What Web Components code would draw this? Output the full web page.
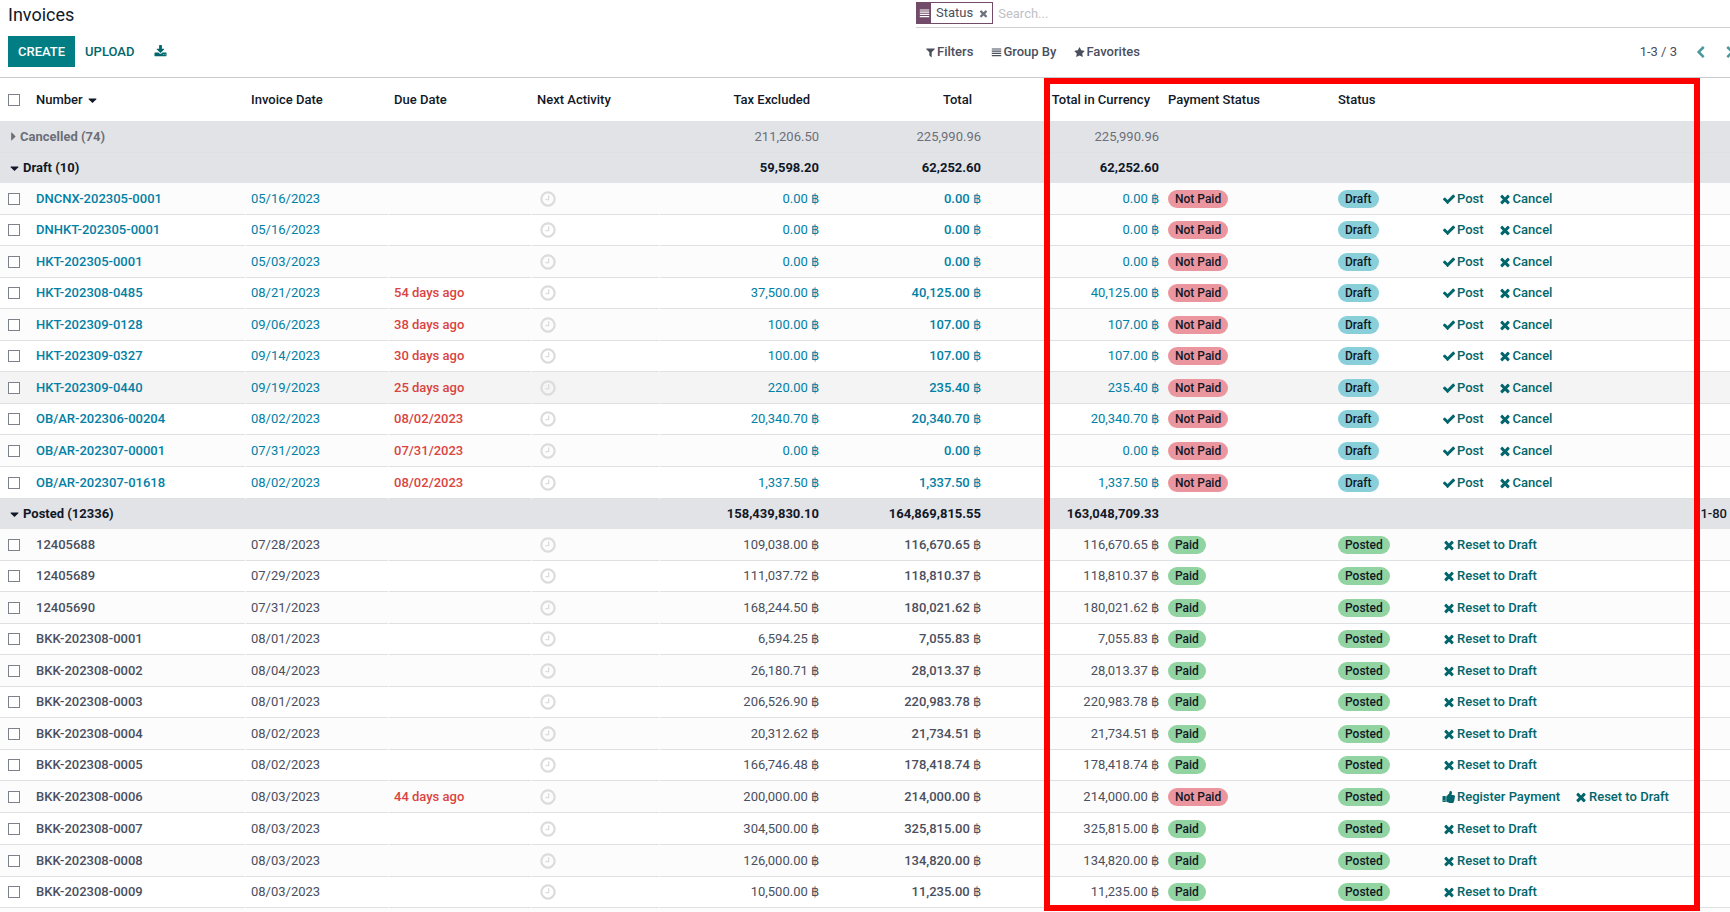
<!DOCTYPE html>
<html lang="en">
<head>
<meta charset="utf-8">
<title>Invoices</title>
<style>
  html, body { height: 100%; }
  body { margin: 0; overflow: hidden; background: #fff; color: #4a4f5e; font: 13px/20px Roboto, "Noto Sans", sans-serif; }
</style>
</head>
<body>
<invoice-app></invoice-app>
<script>
const ICONS = {
  check: 'M1671 566q0 40-28 68l-724 724-136 136q-28 28-68 28t-68-28l-136-136-362-362q-28-28-28-68t28-68l136-136q28-28 68-28t68 28l294 295 656-657q28-28 68-28t68 28l136 136q28 28 28 68z',
  times: 'M1490 1322q0 40-28 68l-136 136q-28 28-68 28t-68-28l-294-294-294 294q-28 28-68 28t-68-28l-136-136q-28-28-28-68t28-68l294-294-294-294q-28-28-28-68t28-68l136-136q28-28 68-28t68 28l294 294 294-294q28-28 68-28t68 28l136 136q28 28 28 68t-28 68l-294 294 294 294q28 28 28 68z',
  clock: 'M1024 544v448q0 14-9 23t-23 9h-320q-14 0-23-9t-9-23v-64q0-14 9-23t23-9h224v-352q0-14 9-23t23-9h64q14 0 23 9t9 23zm416 352q0-148-73-273t-198-198-273-73-273 73-198 198-73 273 73 273 198 198 273 73 273-73 198-198 73-273zm224 0q0 209-103 385.5t-279.5 279.5-385.5 103-385.5-103-279.5-279.5-103-385.5 103-385.5 279.5-279.5 385.5-103 385.5 103 279.5 279.5 103 385.5z',
  download: 'M1344 1344q0-26-19-45t-45-19-45 19-19 45 19 45 45 19 45-19 19-45zm256 0q0-26-19-45t-45-19-45 19-19 45 19 45 45 19 45-19 19-45zm128-224v320q0 40-28 68t-68 28h-1472q-40 0-68-28t-28-68v-320q0-40 28-68t68-28h465l135 136q58 56 136 56t136-56l136-136h464q40 0 68 28t28 68zm-325-569q17 41-14 70l-448 448q-18 19-45 19t-45-19l-448-448q-31-29-14-70 17-39 59-39h256v-448q0-26 19-45t45-19h256q26 0 45 19t19 45v448h256q42 0 59 39z',
  filter: 'M1595 295q17 41-14 70l-493 493v742q0 42-39 59-13 5-25 5-27 0-45-19l-256-256q-19-19-19-45v-486l-493-493q-31-29-14-70 17-39 59-39h1280q42 0 59 39z',
  star: 'M1728 647q0 22-26 48l-363 354 86 500q1 7 1 20 0 21-10.5 35.5t-30.5 14.5q-19 0-40-12l-449-236-449 236q-22 12-40 12-21 0-31.5-14.5t-10.5-35.5q0-6 2-20l86-500-364-354q-25-27-25-48 0-37 56-46l502-73 225-455q19-41 49-41t49 41l225 455 502 73q56 9 56 46z',
  bars: 'M128 224h1536v180H128zM128 590h1536v180H128zM128 956h1536v180H128zM128 1322h1536v180H128z',
  left: 'M1427 301l-531 531 531 531q19 19 19 45t-19 45l-166 166q-19 19-45 19t-45-19l-742-742q-19-19-19-45t19-45l742-742q19-19 45-19t45 19l166 166q19 19 19 45t-19 45z',
  right: 'M365 301l531 531-531 531q-19 19-19 45t19 45l166 166q19 19 45 19t45-19l742-742q19-19 19-45t-19-45l-742-742q-19-19-45-19t-45 19l-166 166q-19 19-19 45t19 45z',
  thumb: 'M320 1344q0-26-19-45t-45-19q-27 0-45.5 19t-18.5 45q0 27 18.5 45.5t45.5 18.5q26 0 45-18.5t19-45.5zm160-512v640q0 26-19 45t-45 19h-288q-26 0-45-19t-19-45v-640q0-26 19-45t45-19h288q26 0 45 19t19 45zm1184 0q0 86-55 149 15 44 15 76 3 76-43 137 17 56 0 117-15 57-54 94 9 112-49 181-64 76-197 78h-129q-66 0-144-15.5t-121.5-29-120.5-39.5q-123-43-158-44-26-1-45-19.5t-19-44.5v-641q0-25 18-43.5t43-20.5q24-2 76-59t101-121q68-87 101-120 18-18 31-48t17.5-48.5 13.5-60.5q7-39 12.5-61t19.5-52 34-50q19-19 45-19 46 0 82.5 10.5t60 26 40 40.5 24 45 12 50 5 45 .5 39q0 38-9.5 76t-19 60-27.5 56q-3 6-10 18t-11 22-8 24h277q78 0 135 57t57 135z',
  down: 'M240 640q0-64 64-64h1184q64 0 64 64 0 28-20 46l-590 590q-46 44-92 0L260 686q-20-18-20-46z',
  side: 'M512 300q0-70 64-70 28 0 46 20l590 592q44 46 0 92l-590 592q-18 20-46 20-64 0-64-70z'
};

class UiIcon extends HTMLElement {
  connectedCallback() {
    if (this.shadowRoot) return;
    this.attachShadow({ mode: 'open' }).innerHTML = `
      <style>
        :host { display: inline-flex; flex: none; width: var(--icon-size, 14px); height: var(--icon-size, 14px); }
        svg { width: 100%; height: 100%; fill: currentColor; }
      </style>
      <svg viewBox="0 0 1792 1792" aria-hidden="true"><path d="${ICONS[this.getAttribute('name')]}"/></svg>`;
  }
}
customElements.define('ui-icon', UiIcon);

class StatusBadge extends HTMLElement {
  connectedCallback() {
    if (this.shadowRoot) return;
    this.attachShadow({ mode: 'open' }).innerHTML = `
      <style>
        :host { display: inline-block; vertical-align: middle; padding: 0 7px; border-radius: 9px;
                font-size: 12px; line-height: 18px; font-weight: 500; color: #111827; background: #91d3a1; }
        :host([kind="danger"]) { background: #eb969e; }
        :host([kind="info"]) { background: #88cfda; }
      </style><slot></slot>`;
  }
}
customElements.define('status-badge', StatusBadge);

class RowAction extends HTMLElement {
  connectedCallback() {
    if (this.shadowRoot) return;
    this.attachShadow({ mode: 'open' }).innerHTML = `
      <style>
        :host { display: inline-flex; }
        button { display: flex; align-items: center; gap: 1px; padding: 0; border: 0; background: none;
                 font: inherit; font-weight: 500; color: #01666b; cursor: pointer; }
      </style>
      <button type="button"><ui-icon name="${this.getAttribute('icon')}"></ui-icon><slot></slot></button>`;
  }
}
customElements.define('row-action', RowAction);

class SearchBar extends HTMLElement {
  connectedCallback() {
    if (this.shadowRoot) return;
    this.attachShadow({ mode: 'open' }).innerHTML = `
      <style>
        :host { display: flex; align-items: center; gap: 5px; box-sizing: border-box; height: 28px; border-bottom: 1px solid #ced0d4; }
        .facet { display: flex; align-items: stretch; box-sizing: border-box; height: 22px; margin-bottom: 1px; border: 1px solid #714b67; --icon-size: 11px; }
        .tag { display: flex; align-items: center; padding: 0 1px 0 2px; background: #714b67; color: #fff; }
        .label { padding: 0 5px; line-height: 20px; }
        button { display: flex; align-items: center; padding: 0 3px 0 0; border: 0; background: none; color: #6d727c; }
        input { flex: 1; min-width: 0; padding: 0; border: 0; outline: 0; background: none; font: inherit; color: inherit; }
        input::placeholder { color: #bfc1c6; opacity: 1; }
      </style>
      <div class="facet">
        <span class="tag"><ui-icon name="bars"></ui-icon></span>
        <span class="label">Status</span>
        <button type="button" aria-label="Remove"><ui-icon name="times"></ui-icon></button>
      </div>
      <input type="text" placeholder="Search..." aria-label="Search">`;
  }
}
customElements.define('search-bar', SearchBar);

class ControlPanel extends HTMLElement {
  connectedCallback() {
    if (this.shadowRoot) return;
    this.attachShadow({ mode: 'open' }).innerHTML = `
      <style>
        :host { display: grid; grid-template-columns: minmax(0, 908fr) minmax(0, 814fr); padding-left: 8px;
                height: 77px; border-bottom: 1px solid #c9cbcf; }
        h1 { margin: 0; font-size: 18px; line-height: 30px; font-weight: 400; color: #111827; }
        .left { display: flex; flex-direction: column; gap: 6px; }
        .buttons, .tools, .menus { display: flex; align-items: center; }
        button { display: flex; align-items: center; padding: 0; border: 0; background: none; font: inherit; font-weight: 500; color: inherit; }
        .buttons { gap: 10px; color: #01666b; }
        .primary { height: 31px; padding: 0 10px; background: #017e84; color: #fff; }
        .icon { margin-left: 10px; --icon-size: 13px; }
        .tools { height: 48px; justify-content: space-between; padding-left: 9px; }
        .menus { gap: 18px; --icon-size: 11px; }
        .menus button { gap: 1px; }
        nav { display: flex; align-items: center; gap: 17px; margin-right: -7px; --icon-size: 13px; }
        nav button { color: #4b999d; }
      </style>
      <div class="left">
        <h1>Invoices</h1>
        <div class="buttons">
          <button type="button" class="primary">CREATE</button>
          <button type="button">UPLOAD</button>
          <button type="button" class="icon" aria-label="Export"><ui-icon name="download"></ui-icon></button>
        </div>
      </div>
      <div>
        <search-bar></search-bar>
        <div class="tools">
          <div class="menus">
            <button type="button"><ui-icon name="filter"></ui-icon>Filters</button>
            <button type="button"><ui-icon name="bars"></ui-icon>Group By</button>
            <button type="button"><ui-icon name="star"></ui-icon>Favorites</button>
          </div>
          <nav aria-label="Pager"><span>1-3 / 3</span>
            <button type="button" aria-label="Previous"><ui-icon name="left"></ui-icon></button>
            <button type="button" aria-label="Next"><ui-icon name="right"></ui-icon></button>
          </nav>
        </div>
      </div>`;
  }
}
customElements.define('control-panel', ControlPanel);

/* number, invoice date, due date, tax excluded, total */
const DRAFT = [
  ['DNCNX-202305-0001', '05/16/2023', '', '0.00', '0.00'],
  ['DNHKT-202305-0001', '05/16/2023', '', '0.00', '0.00'],
  ['HKT-202305-0001', '05/03/2023', '', '0.00', '0.00'],
  ['HKT-202308-0485', '08/21/2023', '54 days ago', '37,500.00', '40,125.00'],
  ['HKT-202309-0128', '09/06/2023', '38 days ago', '100.00', '107.00'],
  ['HKT-202309-0327', '09/14/2023', '30 days ago', '100.00', '107.00'],
  ['HKT-202309-0440', '09/19/2023', '25 days ago', '220.00', '235.40'],
  ['OB/AR-202306-00204', '08/02/2023', '08/02/2023', '20,340.70', '20,340.70'],
  ['OB/AR-202307-00001', '07/31/2023', '07/31/2023', '0.00', '0.00'],
  ['OB/AR-202307-01618', '08/02/2023', '08/02/2023', '1,337.50', '1,337.50']
];
const POSTED = [
  ['12405688', '07/28/2023', '', '109,038.00', '116,670.65'],
  ['12405689', '07/29/2023', '', '111,037.72', '118,810.37'],
  ['12405690', '07/31/2023', '', '168,244.50', '180,021.62'],
  ['BKK-202308-0001', '08/01/2023', '', '6,594.25', '7,055.83'],
  ['BKK-202308-0002', '08/04/2023', '', '26,180.71', '28,013.37'],
  ['BKK-202308-0003', '08/01/2023', '', '206,526.90', '220,983.78'],
  ['BKK-202308-0004', '08/02/2023', '', '20,312.62', '21,734.51'],
  ['BKK-202308-0005', '08/02/2023', '', '166,746.48', '178,418.74'],
  ['BKK-202308-0006', '08/03/2023', '44 days ago', '200,000.00', '214,000.00'],
  ['BKK-202308-0007', '08/03/2023', '', '304,500.00', '325,815.00'],
  ['BKK-202308-0008', '08/03/2023', '', '126,000.00', '134,820.00'],
  ['BKK-202308-0009', '08/03/2023', '', '10,500.00', '11,235.00']
];

const row = ([num, date, due, tax, total], draft) => {
  const unpaid = draft || due;
  const actions = draft
    ? '<row-action icon="check">Post</row-action><row-action icon="times">Cancel</row-action>'
    : (due ? '<row-action icon="thumb">Register Payment</row-action>' : '') + '<row-action icon="times">Reset to Draft</row-action>';
  return `<tr class="${num === 'HKT-202309-0440' ? 'hover' : ''}">
    <td class="sel"><input type="checkbox" aria-label="Select ${num}"></td>
    <td class="strong tick">${num}</td><td class="tick">${date}</td><td class="due tick">${due}</td>
    <td class="act tick"><ui-icon name="clock"></ui-icon></td>
    <td class="num">${tax} ฿</td><td class="num strong">${total} ฿</td><td class="num">${total} ฿</td>
    <td><status-badge kind="${unpaid ? 'danger' : 'success'}">${unpaid ? 'Not Paid' : 'Paid'}</status-badge></td>
    <td><status-badge kind="${draft ? 'info' : 'success'}">${draft ? 'Draft' : 'Posted'}</status-badge></td>
    <td colspan="2"><div class="actions">${actions}</div></td></tr>`;
};
const group = (cls, name, tax, total, currency, pager = '') => `
  <tr class="group ${cls}"><th colspan="5" scope="rowgroup"><span class="name"><ui-icon name="${cls === 'closed' ? 'side' : 'down'}"></ui-icon>${name}</span></th>
  <td class="num">${tax}</td><td class="num">${total}</td><td class="num">${currency}</td><td></td><td></td><td></td><td class="pager">${pager}</td></tr>`;

class InvoiceTable extends HTMLElement {
  connectedCallback() {
    if (this.shadowRoot) return;
    this.attachShadow({ mode: 'open' }).innerHTML = `
      <style>
        :host { display: flex; flex-direction: column; position: relative; overflow: hidden; }
        table { width: 100%; border-collapse: separate; border-spacing: 0; table-layout: fixed; }
        th, td { box-sizing: border-box; padding: 0 5px; text-align: left; white-space: nowrap; line-height: 18px; }
        thead th { height: 43px; font-weight: 500; color: #111827; }
        .num { padding-right: 4px; text-align: right; }
        thead th.num { padding-right: 13px; }
        thead ui-icon { --icon-size: 11px; margin-left: 4px; vertical-align: middle; }
        .sel { padding-left: 8px; }
        input { display: block; appearance: none; box-sizing: border-box; width: 12px; height: 12px; margin: 0; border: 1px solid #7c818b; background: #fff; }
        .rows td { height: 31px; padding-bottom: 1px;
                   background: linear-gradient(#dee0e4, #dee0e4) left bottom / 100% 1px no-repeat; }
        .rows tr:nth-child(odd) td, .rows tr:nth-child(10n) td { height: 32px; }
        .rows td.tick { background-size: calc(100% - 1px) 1px; }
        .rows tr:nth-child(odd) { background: #fcfcfc; }
        .rows tr.hover { background: #f4f4f5; }
        .rows .strong, .rows .due { font-weight: 500; }
        .rows .due { color: #d9443f; }
        .draft { color: #0180a5; }
        .act ui-icon { display: flex; margin-left: 2px; color: #dcdcdd; --icon-size: 18px; }
        .actions { display: flex; gap: 14px; }
        .group { background: #e2e3e7; color: #111827; }
        .group th, .group td { height: 30px; font-weight: 700; }
        .group.closed { color: #6c6f78; }
        .group.closed th, .group.closed td { height: 32px; border-bottom: 1px solid #dee0e4; }
        .group.closed td { font-weight: 400; }
        .name { display: flex; align-items: center; gap: 3px; padding-left: 4px; }
        .name ui-icon { --icon-size: 11px; }
        .closed .name { gap: 1px; padding-left: 3px; }
        .group .pager { padding: 0 3px 0 0; text-align: right; font-weight: 500; }
        .rest { flex: 1; background: #fcfcfc; }
        .outline { position: absolute; box-sizing: border-box; left: 1044px; right: 30px; top: 0; bottom: 1px; border: 6px solid #f00; pointer-events: none; }
      </style>
      <table>
        <colgroup><col style="width:31px"><col style="width:215px"><col style="width:143px"><col style="width:143px"><col style="width:128px">
          <col style="width:163px"><col style="width:162px"><col style="width:178px"><col style="width:170px"><col style="width:104px"><col><col style="width:38px"></colgroup>
        <thead><tr>
          <th class="sel" scope="col"><input type="checkbox" aria-label="Select all"></th>
          <th scope="col">Number<ui-icon name="down"></ui-icon></th><th scope="col">Invoice Date</th><th scope="col">Due Date</th><th scope="col">Next Activity</th>
          <th scope="col" class="num">Tax Excluded</th><th scope="col" class="num">Total</th><th scope="col" class="num">Total in Currency</th>
          <th scope="col">Payment Status</th><th scope="col">Status</th><th colspan="2"></th>
        </tr></thead>
        <tbody>${group('closed', 'Cancelled (74)', '211,206.50', '225,990.96', '225,990.96')}${group('open', 'Draft (10)', '59,598.20', '62,252.60', '62,252.60')}</tbody>
        <tbody class="rows draft">${DRAFT.map(r => row(r, true)).join('')}</tbody>
        <tbody>${group('open', 'Posted (12336)', '158,439,830.10', '164,869,815.55', '163,048,709.33', '1-80')}</tbody>
        <tbody class="rows">${POSTED.map(r => row(r, false)).join('')}</tbody>
      </table>
      <div class="rest"></div>
      <div class="outline"></div>`;
  }
}
customElements.define('invoice-table', InvoiceTable);

class InvoiceApp extends HTMLElement {
  connectedCallback() {
    if (this.shadowRoot) return;
    this.attachShadow({ mode: 'open' }).innerHTML = `
      <style>
        :host { display: flex; flex-direction: column; height: 100vh; overflow: hidden; }
        invoice-table { flex: 1; min-height: 0; }
      </style>
      <control-panel></control-panel>
      <invoice-table></invoice-table>`;
  }
}
customElements.define('invoice-app', InvoiceApp);
</script>
</body>
</html>
